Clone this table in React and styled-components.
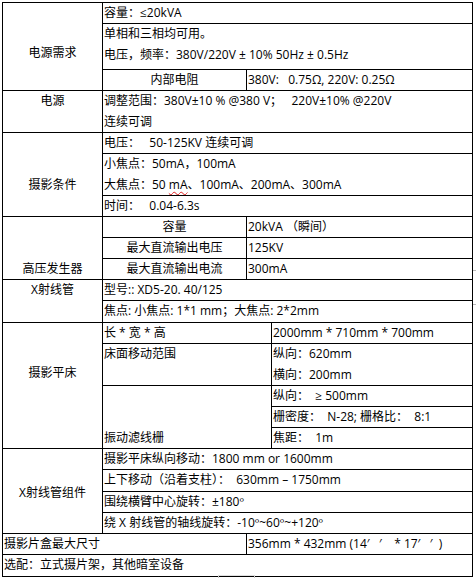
import React from "react";
import styled, { createGlobalStyle } from "styled-components";

const Global = createGlobalStyle`
  html, body { margin: 0; padding: 0; background: #ffffff; }
  body {
    font-family: "Open Sans", "Noto Sans CJK SC", sans-serif;
    font-size: 12px;
    color: #000;
  }
`;

const Page = styled.div`
  position: relative;
  padding: 2px 0 0 2px;
  width: 476px;
  height: 578px;
  box-sizing: border-box;
  overflow: hidden;
`;

const Table = styled.table`
  border-collapse: collapse;
  table-layout: fixed;
  width: 471px;
  font-family: "Open Sans", "Noto Sans CJK SC", sans-serif;
  font-size: 12px;
  line-height: 20px;
  color: #000;
`;

const Row = styled.tr`
  height: ${(p) => p.$h}px;
`;

const Cell = styled.td`
  border: 1px solid #000;
  padding: ${(p) => p.$pt || 0}px 0 0 ${(p) => (p.$center ? 0 : 1)}px;
  vertical-align: ${(p) => p.$valign || "top"};
  text-align: ${(p) => (p.$center ? "center" : "left")};
  white-space: pre;
  overflow: hidden;
  line-height: 20px;
`;

const Line = styled.div`
  height: ${(p) => p.$h || 20}px;
  line-height: 20px;
`;

const Misspelled = styled.span`
  text-decoration: underline wavy #e02020;
  text-decoration-skip-ink: none;
  text-underline-offset: 2px;
  text-decoration-thickness: 1px;
`;

const Tick = styled.div`
  position: absolute;
  left: 473px;
  top: ${(p) => p.$y}px;
  width: 3px;
  height: 1px;
  background: #b8b8b8;
`;

const Marker = styled.div`
  position: absolute;
  left: 218px;
  top: 575px;
  width: 35px;
  height: 4px;
  border-left: 1px solid #c8c8c8;
  border-right: 1px solid #c8c8c8;
  border-top: 1px solid #e0e0e0;
`;

export default function App() {
  return (
    <>
      <Global />
      <Page>
        <Table>
          <colgroup>
            <col style={{ width: 100 }} />
            <col style={{ width: 144 }} />
            <col style={{ width: 25 }} />
            <col style={{ width: 201 }} />
          </colgroup>
          <tbody>
            <Row $h={21}>
              <Cell rowSpan={3} $center $pt={40}>电源需求</Cell>
              <Cell colSpan={3}>容量：≤20kVA</Cell>
            </Row>
            <Row $h={46}>
              <Cell colSpan={3}>
                <Line $h={21}>单相和三相均可用。</Line>
                <Line>电压，频率：380V/220V ± 10% 50Hz ± 0.5Hz</Line>
              </Cell>
            </Row>
            <Row $h={21}>
              <Cell $center>内部电阻</Cell>
              <Cell colSpan={2}>380V:   0.75Ω, 220V: 0.25Ω</Cell>
            </Row>

            <Row $h={42}>
              <Cell $center>电源</Cell>
              <Cell colSpan={3}>
                <Line $h={21}>调整范围：380V±10 % @380 V；   220V±10% @220V</Line>
                <Line>连续可调</Line>
              </Cell>
            </Row>

            <Row $h={21}>
              <Cell rowSpan={3} $center $pt={42}>摄影条件</Cell>
              <Cell colSpan={3}>电压：   50-125KV 连续可调</Cell>
            </Row>
            <Row $h={42}>
              <Cell colSpan={3}>
                <Line $h={21}>小焦点：50mA，100mA</Line>
                <Line>
                  大焦点：50 <Misspelled>mA</Misspelled>、100mA、200mA、300mA
                </Line>
              </Cell>
            </Row>
            <Row $h={21}>
              <Cell colSpan={3}>时间：   0.04-6.3s</Cell>
            </Row>

            <Row $h={21}>
              <Cell rowSpan={3} $center $valign="bottom">高压发生器</Cell>
              <Cell $center>容量</Cell>
              <Cell colSpan={2}>20kVA （瞬间）</Cell>
            </Row>
            <Row $h={21}>
              <Cell $center>最大直流输出电压</Cell>
              <Cell colSpan={2}>125KV</Cell>
            </Row>
            <Row $h={21}>
              <Cell $center>最大直流输出电流</Cell>
              <Cell colSpan={2}>300mA</Cell>
            </Row>

            <Row $h={21}>
              <Cell rowSpan={2} $center>X射线管</Cell>
              <Cell colSpan={3}>型号:: XD5-20. 40/125</Cell>
            </Row>
            <Row $h={22}>
              <Cell colSpan={3}>焦点: 小焦点: 1*1 mm；大焦点: 2*2mm</Cell>
            </Row>

            <Row $h={21}>
              <Cell rowSpan={5} $center $pt={40}>摄影平床</Cell>
              <Cell colSpan={2}>长 * 宽 * 高</Cell>
              <Cell>2000mm * 710mm * 700mm</Cell>
            </Row>
            <Row $h={42}>
              <Cell colSpan={2}>床面移动范围</Cell>
              <Cell>
                <Line $h={21}>纵向：620mm</Line>
                <Line>横向：200mm</Line>
              </Cell>
            </Row>
            <Row $h={21}>
              <Cell colSpan={2} rowSpan={3} $valign="bottom">振动滤线栅</Cell>
              <Cell>纵向：  ≥ 500mm</Cell>
            </Row>
            <Row $h={21}>
              <Cell>栅密度：  N-28; 栅格比：  8:1</Cell>
            </Row>
            <Row $h={21}>
              <Cell>焦距：  1m</Cell>
            </Row>

            <Row $h={20}>
              <Cell rowSpan={4} $center $pt={34}>X射线管组件</Cell>
              <Cell colSpan={3}>摄影平床纵向移动：1800 mm or 1600mm</Cell>
            </Row>
            <Row $h={22}>
              <Cell colSpan={3}>上下移动（沿着支柱）：  630mm – 1750mm</Cell>
            </Row>
            <Row $h={21}>
              <Cell colSpan={3}>围绕横臂中心旋转：±180º</Cell>
            </Row>
            <Row $h={21}>
              <Cell colSpan={3}>绕 X 射线管的轴线旋转：-10º~60º~+120º</Cell>
            </Row>

            <Row $h={21}>
              <Cell colSpan={2}>摄影片盒最大尺寸</Cell>
              <Cell colSpan={2}>356mm * 432mm (14′   ′    * 17′   ′  )</Cell>
            </Row>
            <Row $h={22}>
              <Cell colSpan={4}>选配：立式摄片架，其他暗室设备</Cell>
            </Row>
          </tbody>
        </Table>
        <Tick $y={270} />
        <Tick $y={304} />
        <Marker />
      </Page>
    </>
  );
}
